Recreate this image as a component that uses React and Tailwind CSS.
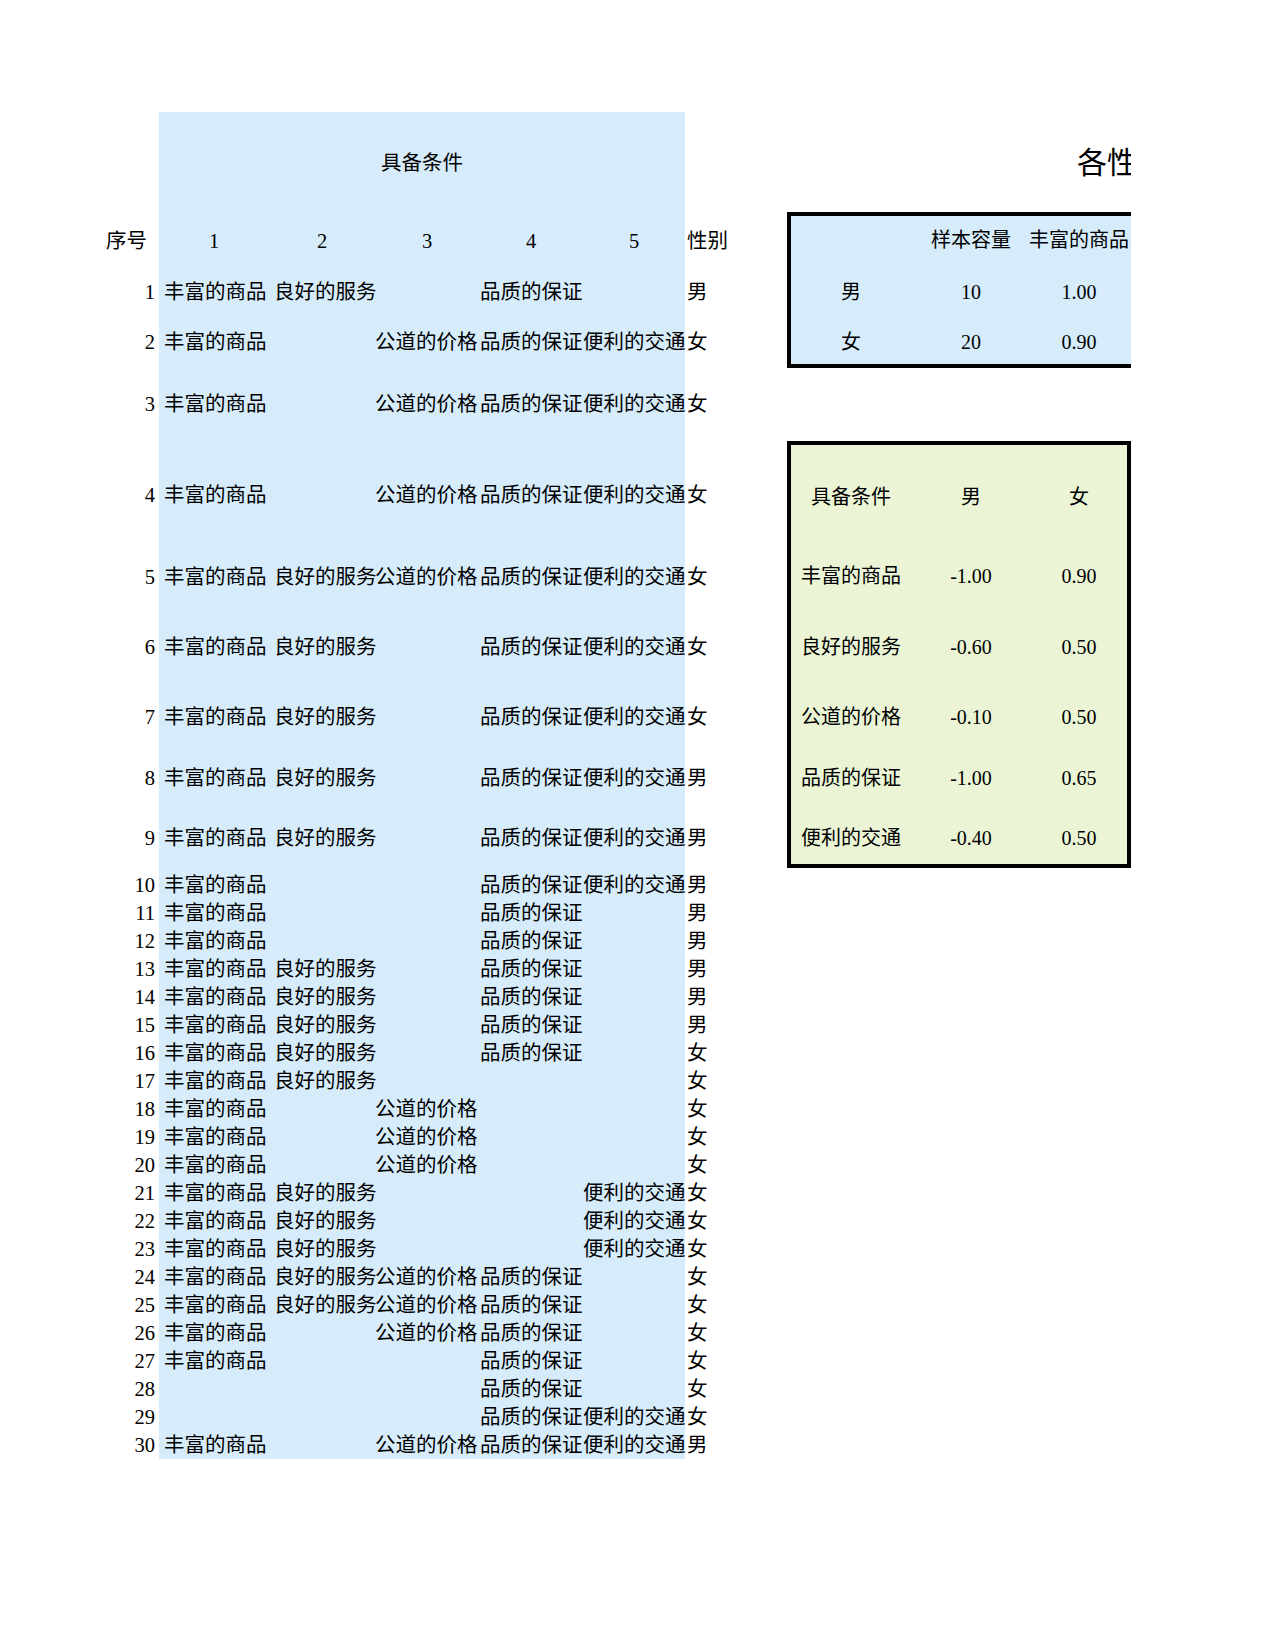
const FONT = "font-['Liberation_Serif','Noto_Sans_CJK_SC',serif]";

const A = "丰富的商品";
const B = "良好的服务";
const C = "公道的价格";
const D = "品质的保证";
const E = "便利的交通";

const CELL = [
  "w-[110px] pl-[5px]",
  "w-[106px] pl-[5px]",
  "w-[104px]",
  "w-[104px] pl-[1px]",
  "w-[102px]",
];

const rows = [
  { h: "h-[51px]", c: [A, B, "", D, ""], g: "男" },
  { h: "h-[50px]", c: [A, "", C, D, E], g: "女" },
  { h: "h-[62px]", c: [A, "", C, D, E], g: "女" },
  { h: "h-[91px]", c: [A, "", C, D, E], g: "女" },
  { h: "h-[82px]", c: [A, B, C, D, E], g: "女" },
  { h: "h-[70px]", c: [A, B, "", D, E], g: "女" },
  { h: "h-[70px]", c: [A, B, "", D, E], g: "女" },
  { h: "h-[61px]", c: [A, B, "", D, E], g: "男" },
  { h: "h-[60px]", c: [A, B, "", D, E], g: "男" },
  { h: "h-[47px]", c: [A, "", "", D, E], g: "男" },
  { h: "h-[28px]", c: [A, "", "", D, ""], g: "男" },
  { h: "h-[28px]", c: [A, "", "", D, ""], g: "男" },
  { h: "h-[28px]", c: [A, B, "", D, ""], g: "男" },
  { h: "h-[28px]", c: [A, B, "", D, ""], g: "男" },
  { h: "h-[28px]", c: [A, B, "", D, ""], g: "男" },
  { h: "h-[28px]", c: [A, B, "", D, ""], g: "女" },
  { h: "h-[28px]", c: [A, B, "", "", ""], g: "女" },
  { h: "h-[28px]", c: [A, "", C, "", ""], g: "女" },
  { h: "h-[28px]", c: [A, "", C, "", ""], g: "女" },
  { h: "h-[28px]", c: [A, "", C, "", ""], g: "女" },
  { h: "h-[28px]", c: [A, B, "", "", E], g: "女" },
  { h: "h-[28px]", c: [A, B, "", "", E], g: "女" },
  { h: "h-[28px]", c: [A, B, "", "", E], g: "女" },
  { h: "h-[28px]", c: [A, B, C, D, ""], g: "女" },
  { h: "h-[28px]", c: [A, B, C, D, ""], g: "女" },
  { h: "h-[28px]", c: [A, "", C, D, ""], g: "女" },
  { h: "h-[28px]", c: [A, "", "", D, ""], g: "女" },
  { h: "h-[28px]", c: ["", "", "", D, ""], g: "女" },
  { h: "h-[28px]", c: ["", "", "", D, E], g: "女" },
  { h: "h-[28px]", c: [A, "", C, D, E], g: "男" },
];

const scores = [
  { h: "h-[56px]", name: A, m: "-1.00", f: "0.90" },
  { h: "h-[86px]", name: B, m: "-0.60", f: "0.50" },
  { h: "h-[54px]", name: C, m: "-0.10", f: "0.50" },
  { h: "h-[68px]", name: D, m: "-1.00", f: "0.65" },
  { h: "h-[52px]", name: E, m: "-0.40", f: "0.50" },
];

function DataTable() {
  return (
    <div className="w-[694px] shrink-0 text-[20.5px] leading-[28px]">
      {/* merged header */}
      <div className="flex h-[102px]">
        <div className="w-[66px]" />
        <div className="flex w-[526px] items-center justify-center bg-[#d6ecfb]">具备条件</div>
        <div className="w-[102px]" />
      </div>

      <div className="flex h-[41px]">
        <div className="flex w-[66px] items-end justify-center pl-[1px]">序号</div>
        <div className="flex bg-[#d6ecfb]">
          <div className="flex w-[110px] items-end justify-center">1</div>
          <div className="flex w-[106px] items-end justify-center">2</div>
          <div className="flex w-[104px] items-end justify-center">3</div>
          <div className="flex w-[104px] items-end justify-center">4</div>
          <div className="flex w-[102px] items-end justify-center">5</div>
        </div>
        <div className="flex w-[102px] items-end pl-[2px]">性别</div>
      </div>

      {rows.map((r, i) => (
        <div key={i} className={`flex ${r.h}`}>
          <div className="flex w-[66px] items-end justify-end pr-[4px]">{i + 1}</div>
          <div className="flex bg-[#d6ecfb]">
            {r.c.map((t, j) => (
              <div key={j} className={`flex items-end whitespace-nowrap ${CELL[j]}`}>
                {t}
              </div>
            ))}
          </div>
          <div className="flex w-[102px] items-end pl-[2px]">{r.g}</div>
        </div>
      ))}
    </div>
  );
}

function SidePanel() {
  return (
    <div className="w-[344px] shrink-0 overflow-hidden">
      <div className="flex h-[100px] items-center whitespace-nowrap pl-[290px] text-[30px]">
        各性别对具备条件的评价
      </div>

      <div className="w-[480px] border-4 border-black bg-[#d6ecfb]">
        <div className="flex h-[48px] items-center">
          <div className="w-[120px]" />
          <div className="flex w-[120px] justify-center">样本容量</div>
          <div className="flex w-[96px] justify-center whitespace-nowrap">丰富的商品</div>
        </div>
        <div className="flex h-[56px] items-center">
          <div className="flex w-[120px] justify-center">男</div>
          <div className="flex w-[120px] justify-center">10</div>
          <div className="flex w-[96px] justify-center">1.00</div>
        </div>
        <div className="flex h-[44px] items-center">
          <div className="flex w-[120px] justify-center">女</div>
          <div className="flex w-[120px] justify-center">20</div>
          <div className="flex w-[96px] justify-center">0.90</div>
        </div>
      </div>

      <div className="mt-[73px] w-[344px] border-4 border-black bg-[#ebf5d6]">
        <div className="flex h-[103px] items-center">
          <div className="flex w-[120px] justify-center">具备条件</div>
          <div className="flex w-[120px] justify-center">男</div>
          <div className="flex w-[96px] justify-center">女</div>
        </div>
        {scores.map((s) => (
          <div key={s.name} className={`flex items-center ${s.h}`}>
            <div className="flex w-[120px] justify-center">{s.name}</div>
            <div className="flex w-[120px] justify-center">{s.m}</div>
            <div className="flex w-[96px] justify-center">{s.f}</div>
          </div>
        ))}
      </div>
    </div>
  );
}

export default function App() {
  return (
    <div className={`min-h-[1650px] w-[1275px] bg-white text-[20px] text-black ${FONT}`}>
      <div className="flex pl-[93px] pt-[112px]">
        <DataTable />
        <SidePanel />
      </div>
    </div>
  );
}
